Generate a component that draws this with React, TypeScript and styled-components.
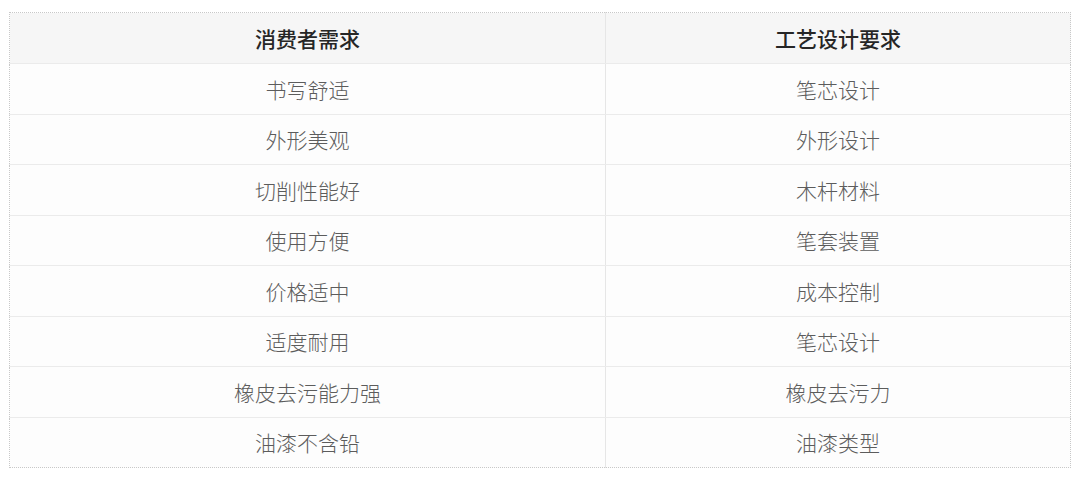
import styled, {createGlobalStyle} from "styled-components";
import {FC} from "react";

type RowItemType = { need: string, craft: string }

const rows: RowItemType[] = [
    {need: "书写舒适", craft: "笔芯设计"},
    {need: "外形美观", craft: "外形设计"},
    {need: "切削性能好", craft: "木杆材料"},
    {need: "使用方便", craft: "笔套装置"},
    {need: "价格适中", craft: "成本控制"},
    {need: "适度耐用", craft: "笔芯设计"},
    {need: "橡皮去污能力强", craft: "橡皮去污力"},
    {need: "油漆不含铅", craft: "油漆类型"},
]

const GlobalStyle = createGlobalStyle`
  html, body {
    margin: 0;
    padding: 0;
    background: #ffffff;
  }
  body {
    font-family: "Noto Sans CJK SC", "Noto Sans", sans-serif;
  }
`

export const App: FC = () => {
    return (
        <>
            <GlobalStyle/>
            <Page>
                <Table>
                    <colgroup>
                        <col style={{width: 596}}/>
                        <col/>
                    </colgroup>
                    <thead>
                    <tr>
                        <HeadCell>消费者需求</HeadCell>
                        <HeadCell>工艺设计要求</HeadCell>
                    </tr>
                    </thead>
                    <tbody>
                    {rows.map((row, i) => (
                        <BodyRow key={i} isLast={i === rows.length - 1}>
                            <Cell>{row.need}</Cell>
                            <Cell>{row.craft}</Cell>
                        </BodyRow>
                    ))}
                    </tbody>
                </Table>
            </Page>
        </>
    );
};

export default App

const Page = styled.div`
  padding: 12px 9px 0 9px;
`
const Table = styled.table`
  width: 1062px;
  border-collapse: collapse;
  table-layout: fixed;
  border: 1px dotted #c8c8c8;
`
const HeadCell = styled.th`
  height: 50px;
  padding: 0;
  background-color: #f6f6f6;
  color: #262626;
  font-size: 21px;
  font-weight: 500;
  text-align: center;
  vertical-align: middle;
  border-bottom: 1px solid #ebebeb;
  & + & {
    border-left: 1px solid #e6e6e6;
  }
`
const BodyRow = styled.tr<{ isLast: boolean }>`
  background-color: #fdfdfd;
  & > td {
    border-bottom: ${props => props.isLast ? "none" : "1px solid #ebebeb"};
  }
`
const Cell = styled.td`
  height: 49.5px;
  padding: 0;
  color: #5c5c5c;
  font-size: 21px;
  font-weight: 300;
  text-align: center;
  vertical-align: middle;
  & + & {
    border-left: 1px solid #e6e6e6;
  }
`
